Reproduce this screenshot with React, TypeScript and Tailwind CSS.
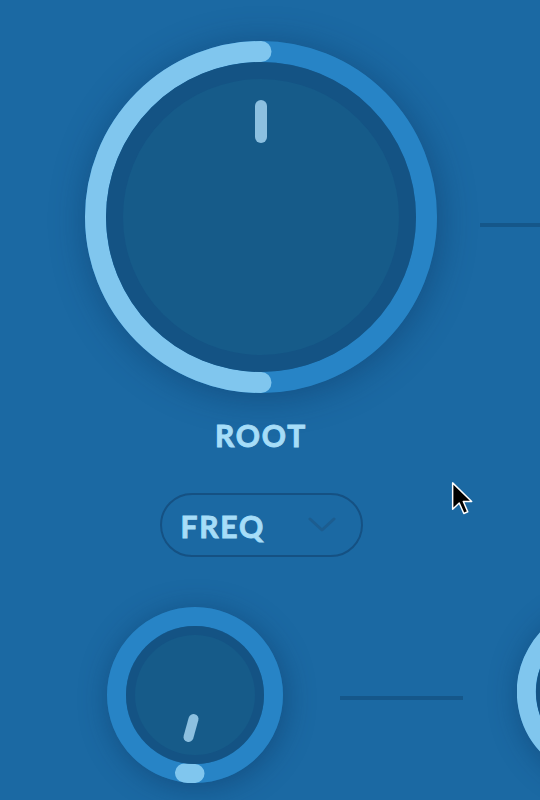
import React from 'react';

const RING = '#2784c6';
const LIGHT = '#80c6ee';
const BAND = '#145384';
const FACE = '#165b89';
const POINTER = '#8cc0e0';

function BigKnob() {
  // 352px knob, value at 50% (light arc on the left half)
  return (
    <div className="w-[352px] h-[352px] rounded-full shrink-0 shadow-[2px_4px_36px_rgba(8,40,80,0.4)]">
      <svg width="352" height="352" viewBox="0 0 352 352">
        <circle cx="176" cy="176" r="165.5" fill="none" stroke={RING} strokeWidth="21" />
        <path d="M176 10.5 A165.5 165.5 0 0 0 176 341.5" fill="none" stroke={LIGHT} strokeWidth="21" strokeLinecap="round" />
        <circle cx="176" cy="176" r="155" fill={BAND} />
        <circle cx="176" cy="176" r="138" fill={FACE} />
        <rect x="170" y="59" width="12" height="43" rx="6" fill={POINTER} />
      </svg>
    </div>
  );
}

function SmallKnob({ arc, pointer }: { arc: string; pointer: [number, number, number, number] }) {
  const [x1, y1, x2, y2] = pointer;
  return (
    <div className="w-[176px] h-[176px] rounded-full shrink-0 shadow-[2px_4px_30px_rgba(8,40,80,0.4)]">
      <svg width="176" height="176" viewBox="0 0 176 176">
        <circle cx="88" cy="88" r="78.5" fill="none" stroke={RING} strokeWidth="19" />
        <path d={arc} fill="none" stroke={LIGHT} strokeWidth="19" strokeLinecap="round" />
        <circle cx="88" cy="88" r="69" fill={BAND} />
        <circle cx="88" cy="88" r="60" fill={FACE} />
        <line x1={x1} y1={y1} x2={x2} y2={y2} stroke={POINTER} strokeWidth="10" strokeLinecap="round" />
      </svg>
    </div>
  );
}

export default function App() {
  return (
    <div
      className="relative w-[540px] h-[800px] overflow-hidden bg-[#1b69a3] flex flex-col"
      style={{ fontFamily: 'Lato, "Noto Sans", sans-serif' }}
    >
      <div className="flex items-start pt-[41px] pl-[85px]">
        <div className="flex flex-col items-center w-[352px] shrink-0">
          <BigKnob />
          <div className="mt-[27px] text-[30px] leading-none font-bold tracking-[0.06em] text-[#a6ddf8] [-webkit-text-stroke:0.9px_#a6ddf8]">ROOT</div>
          <button className="mt-[43px] w-[203px] h-[64px] rounded-full border-2 border-[#155183] flex items-center justify-between pl-[19px] pr-[25px]">
            <span className="mt-[2px] text-[30px] leading-none font-bold tracking-[0.06em] text-[#a6ddf8] [-webkit-text-stroke:0.9px_#a6ddf8]">FREQ</span>
            <svg width="28" height="16" viewBox="0 0 28 16">
              <polyline points="2,2 14,13 26,2" fill="none" stroke="#1c5d90" strokeWidth="3" strokeLinecap="round" strokeLinejoin="round" />
            </svg>
          </button>
        </div>
        <div className="ml-[43px] mt-[182px] h-1 flex-1 bg-[#15578a]" />
      </div>

      <div className="flex items-start pl-[107px] mt-[47px]">
        <div className="mt-[3px] shrink-0">
          <SmallKnob arc="M77.5 166 A78.5 78.5 0 0 0 88 166.5" pointer={[81.5, 130, 86.5, 112]} />
        </div>
        <div className="ml-[57px] mt-[92px] w-[123px] h-1 shrink-0 bg-[#15578a]" />
        <div className="ml-[54px] shrink-0">
          <SmallKnob arc="M88 166.5 A78.5 78.5 0 1 1 156 49" pointer={[60, 60, 45, 45]} />
        </div>
      </div>

      <svg className="absolute left-[451px] top-[481px]" width="23" height="35" viewBox="-1 -1 14 21">
        <path d="M0 0 L0 16 L4 12.2 L6.8 18.6 L9.2 17.6 L6.5 11.3 L11.6 11.3 Z" fill="#000" stroke="#fff" strokeWidth="0.9" strokeLinejoin="round" />
      </svg>
    </div>
  );
}
